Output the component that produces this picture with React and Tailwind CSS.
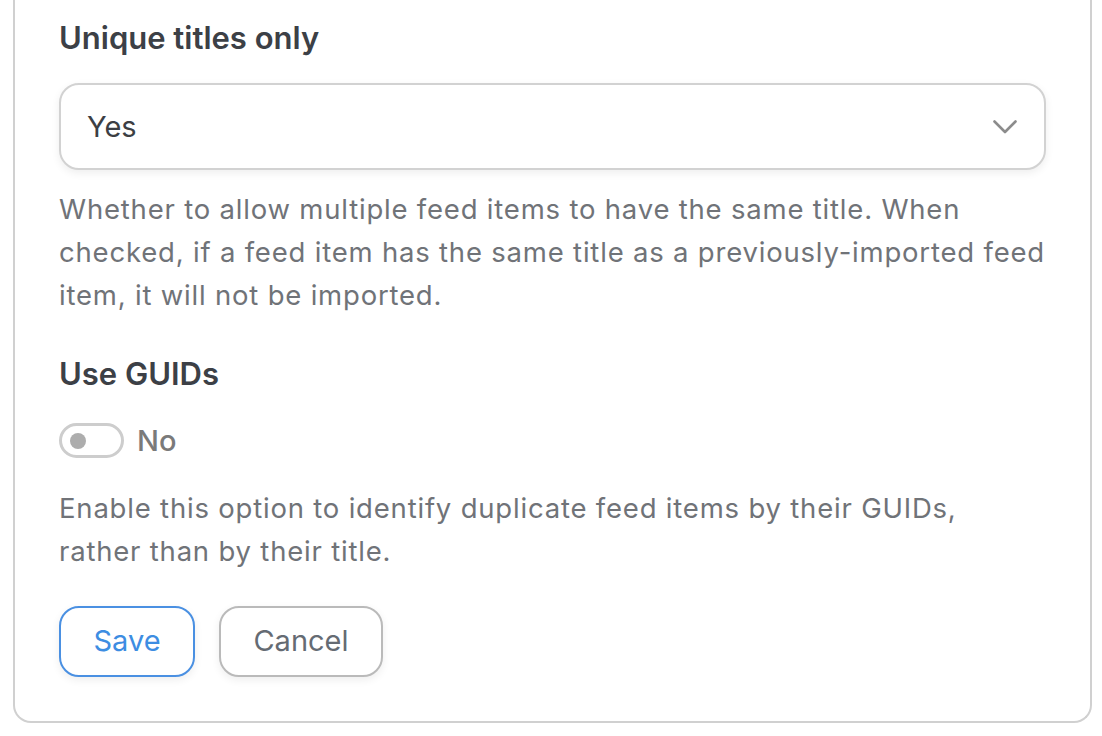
import { useState } from 'react';

const font = { fontFamily: 'Inter, "Open Sans", sans-serif' };

function Chevron() {
  return (
    <svg width="24" height="14" viewBox="0 0 24 14" fill="none" className="shrink-0">
      <path d="M1.5 1.5 L12 12 L22.5 1.5" stroke="#8c8c8c" strokeWidth="2.6" strokeLinecap="round" strokeLinejoin="round" />
    </svg>
  );
}

export default function App() {
  const [guids, setGuids] = useState(false);

  return (
    <div className="min-h-screen bg-white pl-[13px] pr-[10px] pb-[13px]" style={font}>
      <div className="rounded-b-[18px] border-2 border-t-0 border-[#d0d0d0] px-[44px] pt-[18px] pb-[44px]">
        {/* Unique titles */}
        <div className="text-[31px] leading-[40px] font-semibold text-[#3c4046]">Unique titles only</div>
        <div className="mt-[25px] flex h-[87px] items-center justify-between rounded-[20px] border-2 border-[#d2d2d2] bg-white pl-[26px] pr-[27px] shadow-[0_3px_8px_rgba(0,0,0,0.07)]">
          <span className="text-[29px] text-[#3c3f44]">Yes</span>
          <Chevron />
        </div>
        <p className="mt-[18px] whitespace-nowrap text-[27.5px] leading-[43px] text-[#707378] tracking-[0.8px]">
          Whether to allow multiple feed items to have the same title. When<br />
          checked, if a feed item has the same title as a previously-imported feed<br />
          item, it will not be imported.
        </p>

        {/* GUIDs */}
        <div className="mt-[37px] text-[31px] leading-[40px] font-semibold text-[#3c4046]">Use GUIDs</div>
        <button
          type="button"
          onClick={() => setGuids(!guids)}
          className="mt-[25px] flex items-center gap-[13px]"
        >
          <span className="flex h-[35px] w-[65px] items-center rounded-full border-[3px] border-[#cdcdcd] bg-white px-[8px]">
            <span className="h-[16px] w-[16px] rounded-full bg-[#adadad]" />
          </span>
          <span className="text-[29px] font-medium text-[#7a7a7a]">{guids ? 'Yes' : 'No'}</span>
        </button>
        <p className="mt-[24px] whitespace-nowrap text-[27.5px] leading-[43px] text-[#707378] tracking-[0.8px]">
          Enable this option to identify duplicate feed items by their GUIDs,<br />
          rather than by their title.
        </p>

        {/* Actions */}
        <div className="mt-[33px] flex gap-[24px]">
          <button type="button" className="h-[71px] w-[136px] rounded-[20px] border-2 border-[#4a90e2] bg-white text-[29px] text-[#3d8de2] shadow-[0_3px_8px_rgba(0,0,0,0.07)]">
            Save
          </button>
          <button type="button" className="h-[71px] w-[164px] rounded-[20px] border-2 border-[#bababa] bg-white text-[29px] text-[#656b73] shadow-[0_3px_8px_rgba(0,0,0,0.07)]">
            Cancel
          </button>
        </div>
      </div>
    </div>
  );
}
